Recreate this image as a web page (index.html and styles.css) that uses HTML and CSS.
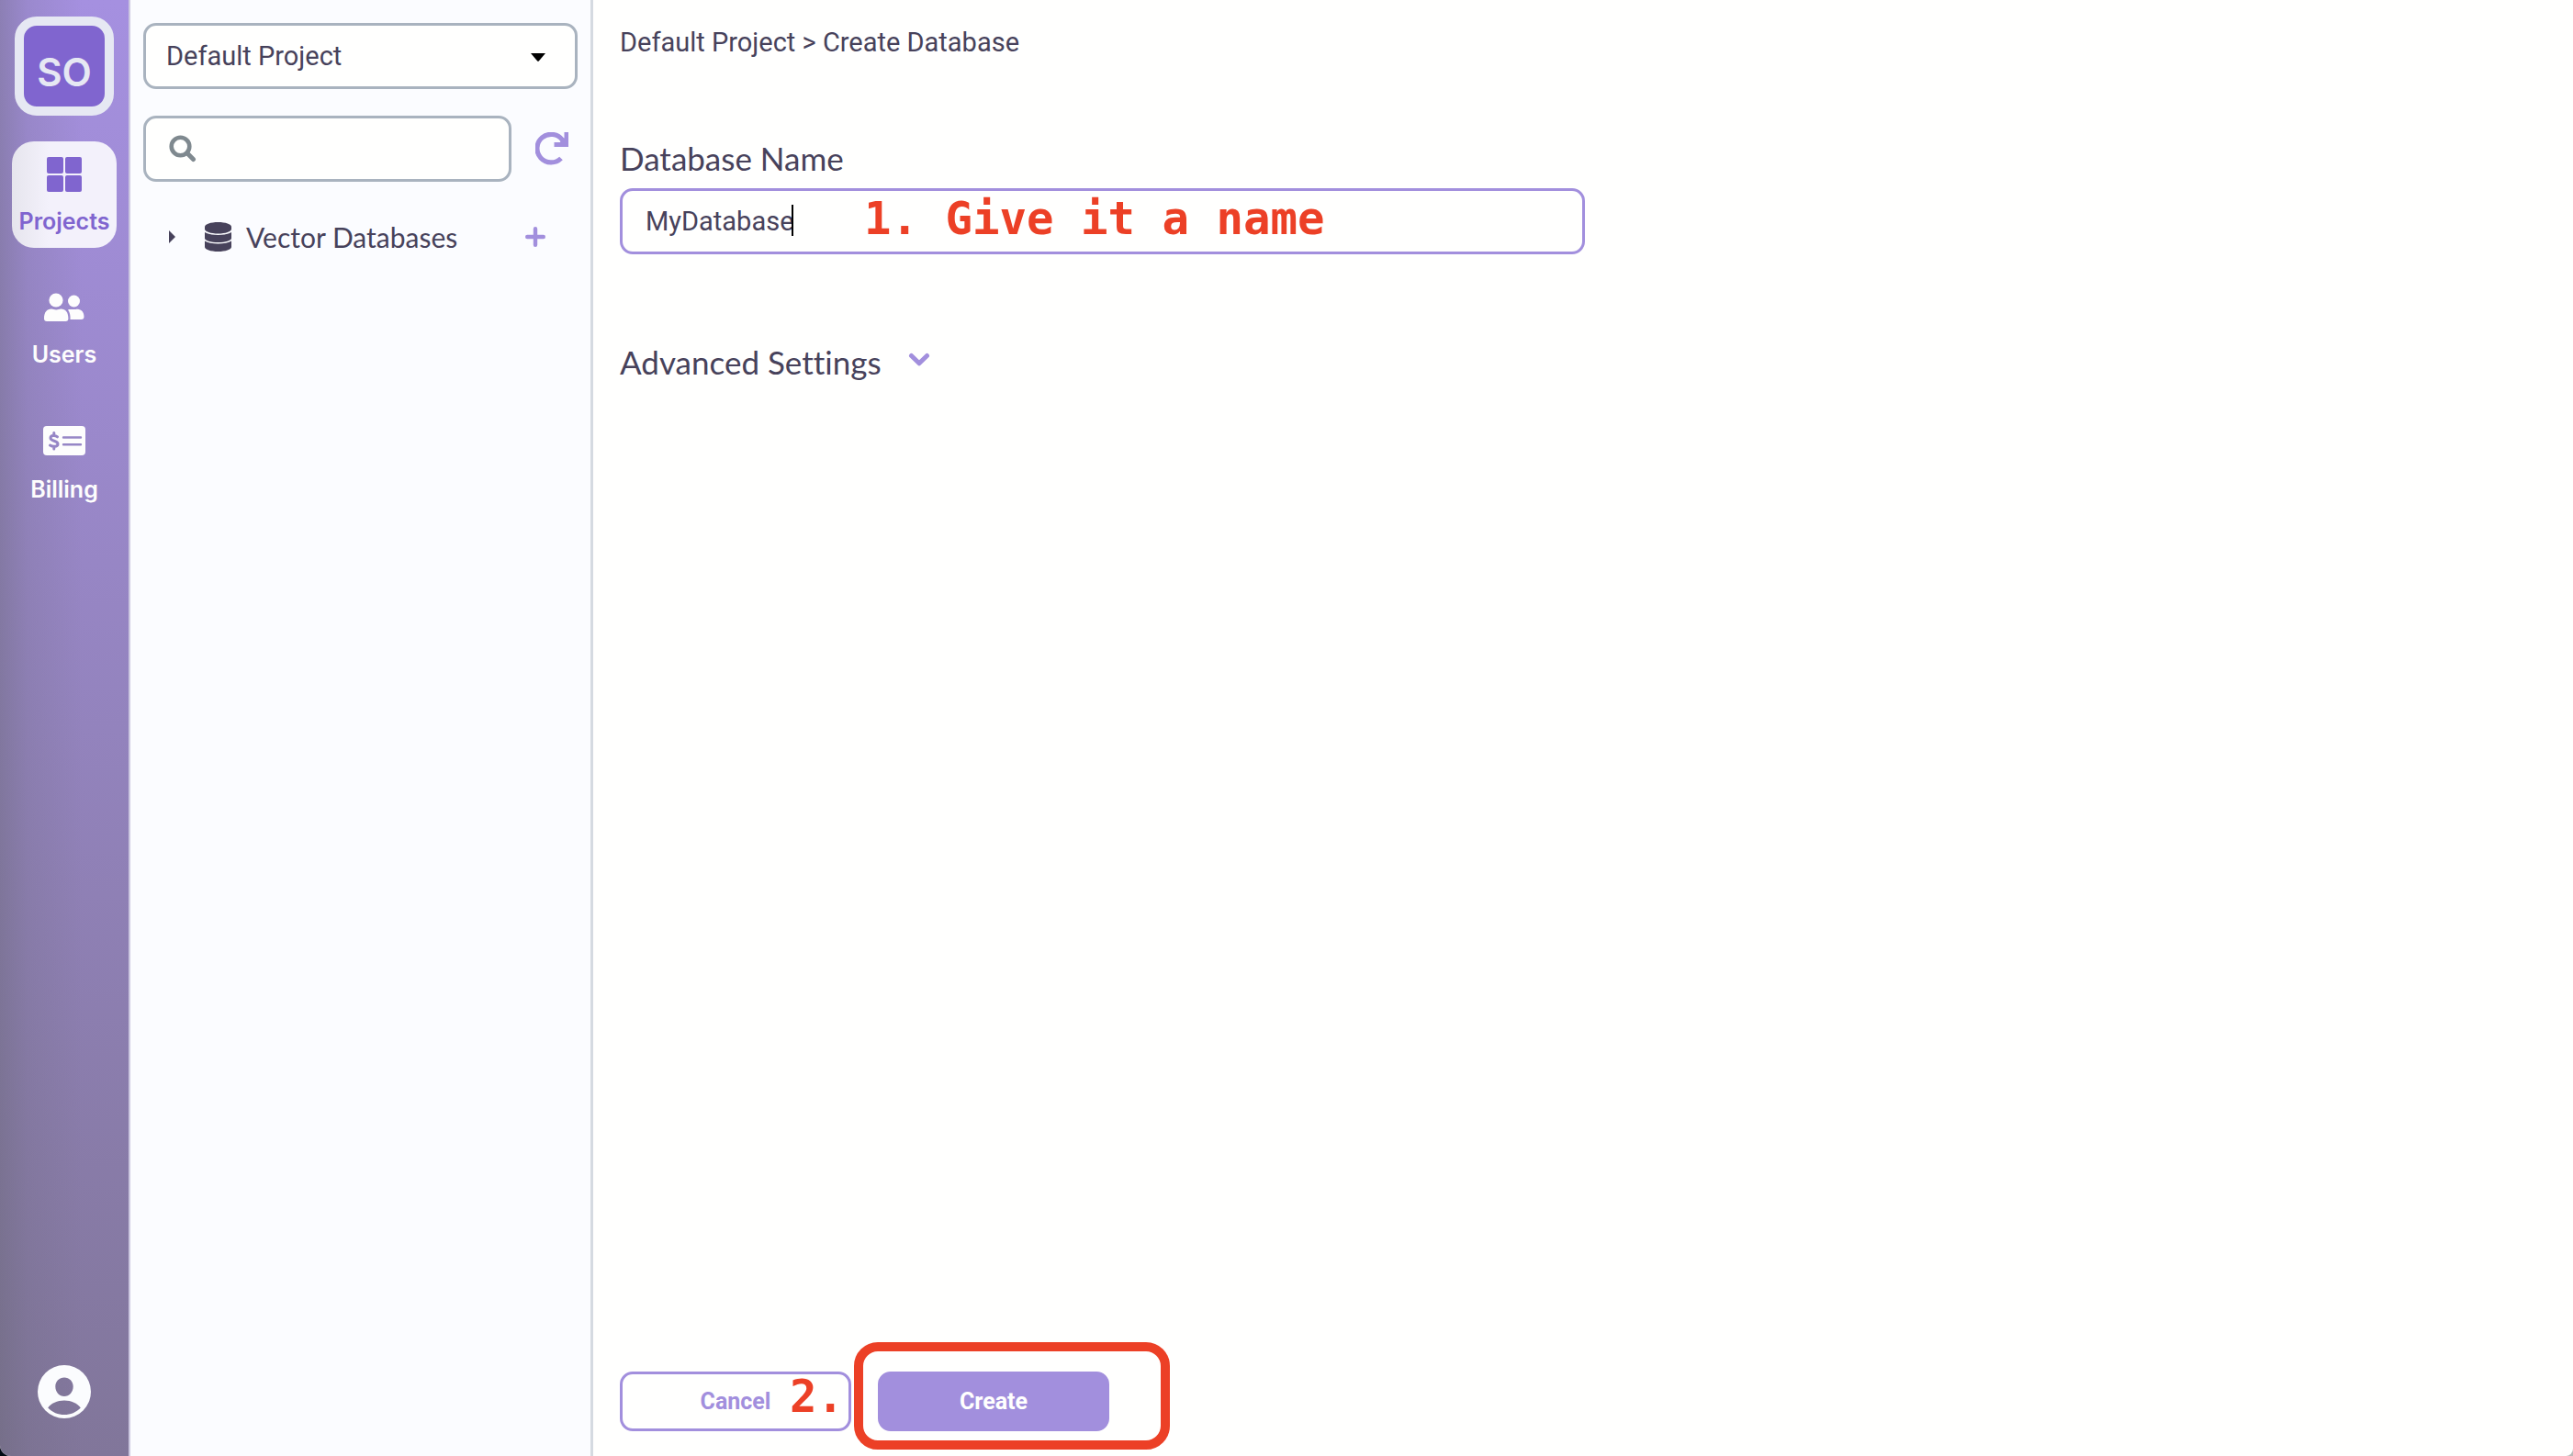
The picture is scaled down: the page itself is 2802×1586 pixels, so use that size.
FILE: index.html
```html
<!DOCTYPE html>
<html lang="en">
<head>
<meta charset="utf-8">
<title>Create Database</title>
<link rel="stylesheet" href="styles.css">
</head>
<body>
<div class="shell">
  <nav class="rail" aria-label="Main">
    <a class="org" href="#">SO</a>
    <a class="rail-item active" href="#">
      <svg width="40" height="40" viewBox="0 0 40 40" fill="currentColor"><rect x="1" y="1" width="18" height="18" rx="2"/><rect x="21" y="1" width="18" height="18" rx="2"/><rect x="1" y="21" width="18" height="18" rx="2"/><rect x="21" y="21" width="18" height="18" rx="2"/></svg>
      <span>Projects</span>
    </a>
    <a class="rail-item" href="#">
      <svg width="44" height="40" viewBox="0 -4 44 40" fill="currentColor"><circle cx="13" cy="8" r="7.6"/><circle cx="32.500" cy="9" r="6.500"/><path d="M0 28c0-7 3-10.500 8-10.500 2 0 3 1 5.200 1s3.200-1 5.200-1c5 0 8 3.500 8 10.500 0 2-1 3-3 3H3c-2 0-3-1-3-3z"/><path d="M26 18.500c1.200-.8 3.500-.5 6.500-.5 2 0 3-.5 4.500-.2C41.500 18.500 43.500 22 43.500 26c0 2-1 3-3 3H28.500c.3-4-.3-7.500-2.500-10.500z"/></svg>
      <span>Users</span>
    </a>
    <a class="rail-item" href="#">
      <svg width="46" height="40" viewBox="0 -2 46 40"><rect width="46" height="32" rx="4" fill="currentColor"/><g fill="none" stroke="#9686c6" stroke-width="2.400" stroke-linecap="round"><path d="M22 12.500h19M22 20.200h19"/><path stroke-width="3" d="M15.500 11.800C13.500 10 8 9.500 8 13c0 4 8 2.500 8 6.700 0 3.300-6 3-8.500 1.300M11.800 7.500v2.500M11.800 22.500v2.500"/></g></svg>
      <span>Billing</span>
    </a>
    <a class="account" href="#" aria-label="Account">
      <svg width="58" height="58" viewBox="0 0 58 58" fill="currentColor"><path fill-rule="evenodd" d="M29 0a29 29 0 1 0 0 58 29 29 0 0 0 0-58zM29 13.500c5.500 0 9.700 4.300 9.700 9.700C38.700 29.300 34.500 34 29 34s-9.700-4.700-9.700-10.800c0-5.400 4.200-9.700 9.700-9.700zM29 38.500c7.500 0 14.500 3.200 17.800 8C42 51.500 35.800 54 29 54s-13-2.500-17.800-7.500c3.300-4.800 10.300-8 17.800-8z"/></svg>
    </a>
  </nav>

  <aside class="panel">
    <div class="project">
      <select aria-label="Project"><option>Default Project</option></select>
      <svg class="project-arrow" width="16" height="9" viewBox="0 0 16 9"><path d="M0 0h16L9 8.300a1.400 1.400 0 0 1-2 0z"/></svg>
    </div>
    <div class="search-row">
      <div class="search">
        <svg width="30" height="30" viewBox="0 0 30 30" fill="none" stroke="#7f898f"><circle cx="12.500" cy="12.500" r="9.800" stroke-width="4.600"/><path stroke-width="5" stroke-linecap="round" d="M20.500 20.500l6 6"/></svg>
        <input type="text" aria-label="Search">
      </div>
      <button class="icon-button" type="button" aria-label="Refresh">
        <svg width="36" height="36" viewBox="0 0 36 36" fill="none" stroke="#a28fdd"><path stroke-width="5.200" d="M28 28.500A15.300 15.300 0 1 1 29.500 8.500"/><path fill="#a28fdd" stroke="none" d="M31.500 0H36v16H20.500v-5H27l1.500-5 3 .5z"/></svg>
      </button>
    </div>
    <div class="tree-row">
      <svg class="tree-caret" width="7" height="14" viewBox="0 0 7 14" fill="#47425b"><path d="M0 0l7 7-7 7z"/></svg>
      <svg class="tree-db" width="29" height="32" viewBox="0 0 29 32" fill="#47425b"><path d="M14.500 0C22.500 0 29 2.200 29 5v2.500c0 2.800-6.500 5-14.500 5S0 10.300 0 7.500V5c0-2.800 6.500-5 14.500-5z"/><path d="M0 11c3 2 8.500 3 14.500 3S26 13 29 11v6.500c0 2.500-6.500 4.500-14.500 4.500S0 20 0 17.500z"/><path d="M0 20.500c3 2 8.500 3 14.500 3s11.500-1 14.500-3V27c0 2.800-6.500 5-14.500 5S0 29.800 0 27z"/></svg>
      <span class="tree-label">Vector Databases</span>
      <button class="icon-button" type="button" aria-label="Add database">
        <svg width="22" height="22" viewBox="0 0 22 22" fill="none" stroke="#a28fdd" stroke-width="4.400" stroke-linecap="round"><path d="M11 2.200v17.600M2.200 11h17.600"/></svg>
      </button>
    </div>
  </aside>

  <main class="main">
    <div class="breadcrumb">Default Project &gt; Create Database</div>
    <label class="heading" for="db-name">Database Name</label>
    <div class="field">
      <input id="db-name" type="text" value="MyDatabase">
      <span class="text-caret"></span>
      <span class="note note-name">1. Give it a name</span>
    </div>
    <button class="advanced" type="button">
      <span class="heading">Advanced Settings</span>
      <svg width="24" height="16" viewBox="0 0 24 16" fill="none" stroke="#a28fdd" stroke-width="5" stroke-linecap="round" stroke-linejoin="round"><path d="M3.500 3.500l8.500 8.300 8.500-8.300"/></svg>
    </button>
    <div class="actions">
      <div class="action">
        <button class="button" type="button">Cancel</button>
        <span class="note note-step">2.</span>
      </div>
      <div class="action">
        <button class="button primary" type="button">Create</button>
        <span class="note-box"></span>
      </div>
    </div>
  </main>
</div>
</body>
</html>
```
FILE: styles.css
```css
* { box-sizing: border-box; }

body {
  margin: 0;
  background: linear-gradient(90deg, #020b14 50%, #b9b9b9 50%);
  color: #47425b;
  font-family: Roboto, sans-serif;
  font-size: 29px;
  line-height: 32px;
}

button, input, select {
  font: inherit;
  color: inherit;
}

svg { display: block; flex: none; }

.shell {
  display: grid;
  grid-template-columns: 140px 506px 1fr;
  min-height: 100vh;
  overflow: hidden;
  border-radius: 0 0 8px 12px;
  background: #fffffe;
}

.rail {
  display: flex;
  flex-direction: column;
  align-items: center;
  padding: 18px 0 41px;
  background:
    linear-gradient(90deg, rgba(100, 100, 110, .38), rgba(100, 100, 110, .16) 30px, rgba(100, 100, 110, 0) 90px),
    linear-gradient(#a590e0, #81769a);
  font-family: Inter, sans-serif;
}

.rail a { text-decoration: none; }

.org {
  width: 108px;
  height: 108px;
  margin-bottom: 28px;
  border: 10px solid #e6e8f3;
  border-radius: 24px;
  background: #8065cf;
  color: #e6e8f3;
  font-size: 42px;
  font-weight: 600;
  line-height: 102px;
  text-align: center;
}

.rail-item {
  display: flex;
  flex-direction: column;
  align-items: center;
  gap: 15px;
  width: 114px;
  height: 116px;
  margin-bottom: 31px;
  padding-top: 16px;
  border-radius: 24px;
  color: #fdfdfd;
  font-size: 25px;
  font-weight: 600;
}

.rail-item.active {
  margin-bottom: 29px;
  background: linear-gradient(90deg, #e6e5ed, #f3f1fb 40px);
  color: #8065cf;
}

.account { margin-top: auto; color: #fbfcfe; }

.panel {
  min-width: 0;
  padding: 25px 14px;
  border-left: 2px solid #ccc8e0;
  border-right: 3px solid #d5dae1;
  background: #fbfcff;
}

.project { position: relative; }

.project select {
  display: block;
  width: 100%;
  height: 72px;
  padding: 0 22px;
  appearance: none;
  border: 3px solid #a9b3bf;
  border-radius: 14px;
  background: #fffffe;
}

.project-arrow {
  position: absolute;
  right: 35px;
  top: 33px;
  pointer-events: none;
}

.search-row {
  display: flex;
  align-items: center;
  gap: 26px;
  margin-top: 29px;
}

.search {
  display: flex;
  flex: 1;
  align-items: center;
  gap: 12px;
  min-width: 0;
  height: 72px;
  padding: 0 25px;
  border: 3px solid #a9b3bf;
  border-radius: 14px;
  background: #fffffe;
}

.search input {
  flex: 1;
  min-width: 0;
  border: 0;
  background: none;
  outline: 0;
}

.icon-button {
  padding: 0;
  border: 0;
  background: none;
}

.search-row .icon-button { margin-right: 10px; }

.tree-row {
  display: flex;
  align-items: center;
  margin-top: 40px;
  padding: 0 35px 0 28px;
}

.tree-db { margin: 0 16px 0 32px; }

.tree-label {
  flex: 1;
  font-family: Lato, sans-serif;
  font-size: 30px;
  line-height: 40px;
}

.main {
  display: flex;
  flex-direction: column;
  min-width: 0;
  padding: 30px 29px 27px;
}

.breadcrumb { margin-bottom: 90px; }

.heading {
  font-family: Lato, sans-serif;
  font-size: 35px;
  font-variant-ligatures: none;
  line-height: 40px;
}

.field {
  position: relative;
  max-width: 1051px;
  margin: 13px 0 97px;
}

.field input {
  display: block;
  width: 100%;
  height: 72px;
  padding: 0 25px;
  border: 3px solid #a28fdd;
  border-radius: 14px;
  background: #fffffe;
  outline: 0;
}

.text-caret {
  position: absolute;
  left: 187px;
  top: 18px;
  width: 2px;
  height: 34px;
  background: #000;
}

.note {
  position: absolute;
  color: #ec4026;
  font-family: "DejaVu Sans Mono", monospace;
  font-size: 49px;
  font-weight: 700;
  line-height: 56px;
  white-space: pre;
  pointer-events: none;
}

.note-name { left: 266px; top: 6px; }

.advanced {
  display: flex;
  align-items: center;
  align-self: flex-start;
  gap: 29px;
  padding: 0;
  border: 0;
  background: none;
}

.advanced svg { margin-bottom: 4px; }

.actions {
  display: flex;
  gap: 29px;
  margin-top: auto;
}

.action { position: relative; }

.button {
  display: block;
  width: 252px;
  height: 65px;
  border: 3px solid #a28fdd;
  border-radius: 14px;
  background: #fffffe;
  color: #a28fdd;
  font-size: 25px;
  font-weight: 700;
}

.button.primary { background: #a28fdd; color: #fffffe; }

.note-step { left: 185px; top: 0; }

.note-box {
  position: absolute;
  left: -26px;
  top: -32px;
  width: 344px;
  height: 117px;
  border: 10px solid #ec4026;
  border-radius: 26px;
  pointer-events: none;
}
```
